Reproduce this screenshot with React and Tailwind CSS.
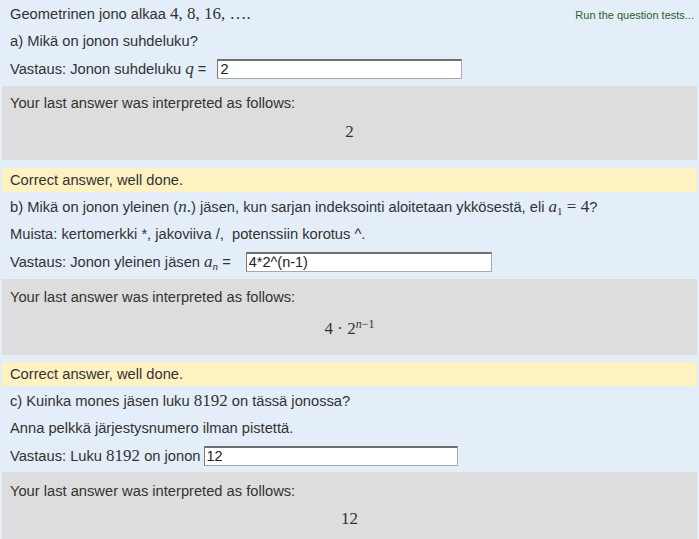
import React from 'react';

const sans = "font-['Liberation_Sans',Arial,sans-serif]";
const serif = "font-['Liberation_Serif','Times_New_Roman',serif]";

function Line({ h = 'h-[27px]', children, className = '' }) {
  return <div className={`${h} flex items-center pl-[8px] ${className}`}>{children}</div>;
}

function Answer({ value, width }) {
  return (
    <div
      className={`h-[20px] ${width} bg-white border border-[#a9a9a9] border-t-[#6f6f6f] border-l-[#7a7a7a] border-t-2 flex items-center pl-[2px] text-[14.5px] text-[#222] leading-none`}
    >
      {value}
    </div>
  );
}

function Interpreted({ h, top, children }) {
  return (
    <div className={`${h} bg-[#dddddd] flex flex-col`}>
      <div className={`${top} pl-[8px]`}>Your last answer was interpreted as follows:</div>
      <div className="flex-1 flex items-center justify-center">{children}</div>
    </div>
  );
}

function Correct() {
  return (
    <div className="h-[24px] bg-[#fff2c2] flex items-center pl-[8px]">Correct answer, well done.</div>
  );
}

export default function App() {
  return (
    <div className={`w-[699px] h-[539px] overflow-hidden bg-[#e3eef8] text-[#333] ${sans} text-[14.7px] pl-[2px] pr-[2px]`}>
      <Line h="h-[28px]" className="justify-between pr-[3px]">
        <span>
          Geometrinen jono alkaa <span className={`${serif} text-[17px]`}>4, 8, 16, ….</span>
        </span>
        <span className="text-[11px] text-[#2d5f2d] self-start mt-[7px]">Run the question tests...</span>
      </Line>
      <Line>a) Mikä on jonon suhdeluku?</Line>
      <Line h="h-[28px]">
        <span>
          Vastaus: Jonon suhdeluku <span className={`${serif} italic text-[17px]`}>q</span> =
        </span>
        <div className="ml-[11px]">
          <Answer value="2" width="w-[245px]" />
        </div>
      </Line>
      <div className="h-[3px]" />
      <Interpreted h="h-[74px]" top="pt-[6px]">
        <span className={`${serif} text-[17px] mt-[-10px]`}>2</span>
      </Interpreted>
      <div className="h-[8px]" />
      <Correct />
      <Line h="h-[29px]">
        <span>
          b) Mikä on jonon yleinen (<span className={`${serif} italic text-[17px]`}>n</span>
          <span className={`${serif} text-[17px]`}>.</span>) jäsen, kun sarjan indeksointi aloitetaan ykkösestä, eli{' '}
          <span className={`${serif} text-[17px]`}>
            <i>a</i>
            <sub className="text-[11px]">1</sub> = 4
          </span>
          ?
        </span>
      </Line>
      <Line>Muista: kertomerkki *, jakoviiva /,&nbsp; potenssiin korotus ^.</Line>
      <Line>
        <span>
          Vastaus: Jonon yleinen jäsen{' '}
          <span className={`${serif} text-[17px]`}>
            <i>a</i>
            <sub className="text-[11px] italic">n</sub>
          </span>{' '}
          =
        </span>
        <div className="ml-[15px]">
          <Answer value="4*2^(n-1)" width="w-[246px]" />
        </div>
      </Line>
      <div className="h-[4px]" />
      <Interpreted h="h-[76px]" top="pt-[7px]">
        <span className={`${serif} text-[17px] mt-[-6px]`}>
          4 · 2<sup className="text-[12px] italic">n</sup>
          <sup className="text-[12px]">−1</sup>
        </span>
      </Interpreted>
      <div className="h-[7px]" />
      <Correct />
      <Line h="h-[29px]">
        <span>
          c) Kuinka mones jäsen luku <span className={`${serif} text-[17px]`}>8192</span> on tässä jonossa?
        </span>
      </Line>
      <Line>Anna pelkkä järjestysnumero ilman pistettä.</Line>
      <Line>
        <span>
          Vastaus: Luku <span className={`${serif} text-[17px]`}>8192</span> on jonon
        </span>
        <div className="ml-[3px]">
          <Answer value="12" width="w-[254px]" />
        </div>
      </Line>
      <div className="h-[3px]" />
      <Interpreted h="h-[80px]" top="pt-[8px]">
        <span className={`${serif} text-[17px] mt-[-16px]`}>12</span>
      </Interpreted>
    </div>
  );
}
